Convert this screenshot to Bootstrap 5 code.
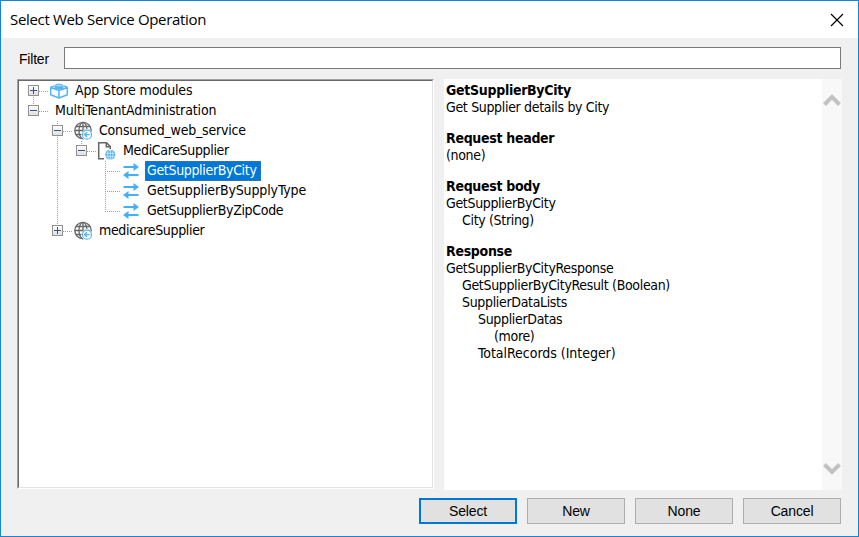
<!DOCTYPE html>
<html lang="en">
<head>
<meta charset="utf-8">
<title>Select Web Service Operation</title>
<link href="https://cdn.jsdelivr.net/npm/bootstrap@5.3.0/dist/css/bootstrap.min.css" rel="stylesheet">
<style>
body{margin:0;background:#f0f0f0;color:#000;font-family:"DejaVu Sans Condensed","DejaVu Sans",sans-serif;font-size:14px;overflow:hidden}
.dialog{width:859px;height:537px;border:1px solid #1883d7;background:#f0f0f0}
.titlebar{height:37px;padding:0 14px 0 9px;font-family:"Open Sans","Noto Sans",sans-serif;font-size:15px;letter-spacing:-.33px}
.filter-row{height:22px;margin:9px 17px 0 18px}
.filter-row label{width:45px;font:14px/22px "Liberation Sans",Arial,sans-serif;letter-spacing:-.2px;padding-top:1px}
.filter-row input{height:22px;min-width:0;border:1px solid #7a7a7a;background:#fff;outline:0}
.panes{margin:10px 16px 0 16px;height:411px;gap:10px}
.tree{width:417px;height:410px;border:1px solid;border-color:#a0a0a0 #fff #fff #a0a0a0;background:#fff}
.tree-in{height:408px;border:1px solid;border-color:#696969 #e3e3e3 #e3e3e3 #696969;padding-left:2px}
.node{height:20px;white-space:nowrap}
.cell{width:24px;height:20px;flex:none;display:flex;align-items:center;justify-content:center;position:relative}
.cell::before{content:"";position:absolute;left:12px;width:1px;top:0;bottom:0;background:none}
.g-full::before,.g-up::before,.g-down::before{background:repeating-linear-gradient(180deg,#a0a0a0 0 1px,transparent 1px 2px)}
.g-up::before{bottom:10px}
.g-down::before{top:10px}
.dots{height:1px;width:9px;flex:none;margin-left:-6px;background:repeating-linear-gradient(90deg,#a0a0a0 0 1px,transparent 1px 2px)}
.dots-leaf{width:15px;margin-left:-12px}
.toggle{position:relative;left:.5px;top:-.5px;width:11px;height:11px;display:block}
.icon{width:20px;height:20px;flex:none;margin-left:1px;margin-right:4px}
.text{height:20px;line-height:18px;padding:0 4px 0 2px}
.noicon{margin-left:5px}
.picked{background:#0078d7;color:#fff;outline:1px dotted #3f7ba8;outline-offset:-1px}
.k1{letter-spacing:-.13px}.k2{letter-spacing:-.2px}.k3{letter-spacing:-.33px}
.details{width:378px;padding:3px 0 0 2px;background:#fff;line-height:17px;letter-spacing:-.33px}
.details p{margin:0 0 14px}
.details b{display:block;letter-spacing:-.3px}
.details span{display:block}
.details .wide{letter-spacing:-.03px}
.in1{padding-left:16px}.in2{padding-left:32px}.in3{padding-left:48px}
.scroll{width:20px;background:#f8f8f8;padding:14px 0 14px 1px}
.actions{margin:8px 17px 0 0;gap:10px}
.actions .btn{width:98px;height:26px;padding:0;border:1px solid #adadad;border-radius:0;background:#e1e1e1;color:#000;font:14px/22px "Liberation Sans",Arial,sans-serif;letter-spacing:-.15px}
.actions .main{border:2px solid #0078d7;line-height:20px}
</style>
<script src="https://cdn.jsdelivr.net/npm/bootstrap@5.3.0/dist/js/bootstrap.bundle.min.js"></script>
</head>
<body>
<svg width="0" height="0" class="position-absolute">
  <defs>
    <linearGradient id="boxfill" x1="0" y1="0" x2="0" y2="1"><stop offset="0" stop-color="#fff"/><stop offset="1" stop-color="#dedede"/></linearGradient>
    <symbol id="minus" viewBox="0 0 11 11"><rect x=".5" y=".5" width="10" height="10" fill="url(#boxfill)" stroke="#919191"/><path d="M2 5.5h7" stroke="#3b4f9f"/></symbol>
    <symbol id="plus" viewBox="0 0 11 11"><use href="#minus"/><path d="M5.500 2v7" stroke="#3b4f9f"/></symbol>
    <symbol id="module" viewBox="0 0 20 20"><g fill="none" stroke="#55b5f5" stroke-width="1.500" stroke-linejoin="round"><path d="M1.700 6.500 10 9.500 18.300 6.500V13.800L10 17 1.700 13.800zM10 9.500V17M1.700 6.500 5 4.800M18.300 6.500 15 4.800"/></g><path d="M5.500 4.600v2.300c0 2 9 2 9 0V4.600z" fill="#55b5f5"/><ellipse cx="10" cy="4.600" rx="4.200" ry="1.400" fill="#a5d9fc" stroke="#55b5f5"/></symbol>
    <symbol id="globe" viewBox="0 0 20 20"><g fill="none" stroke="#666" stroke-width="1.300"><circle cx="10" cy="9.500" r="8.200"/><ellipse cx="10" cy="9.500" rx="4" ry="8.200"/><path d="M10 1.500v16M2.800 5.500h14.400M1.800 9.500h16.400M2.800 13.500h14.400"/></g><circle cx="14" cy="13.700" r="5.600" fill="#fff"/><circle cx="14" cy="13.700" r="4.500" fill="#fff" stroke="#55b5f5" stroke-width="1.200"/><path d="M16.800 13.600h-5M13.900 11.200l-2.400 2.400 2.400 2.400" fill="none" stroke="#55b5f5" stroke-width="1.400"/></symbol>
    <symbol id="doc" viewBox="0 0 20 20"><path d="M7 17.800H1.700V1.700H9.500L13.300 5.500V8M9.300 2V5.800H13" fill="none" stroke="#666" stroke-width="1.500"/><circle cx="13.300" cy="13.800" r="5" fill="#45b0fa"/><path d="M13.300 9.300v9M8.800 12.300h9M8.800 15.300h9" stroke="#fff" stroke-width=".6"/><ellipse cx="13.300" cy="13.800" rx="2.600" ry="4.500" fill="none" stroke="#fff" stroke-width=".6"/></symbol>
    <symbol id="swap" viewBox="0 0 20 20"><path d="M2.500 6H14M6 14H17.500" stroke="#45b0fa" stroke-width="2"/><path d="M12.500 2 18 6l-5.500 4zM7.500 10 2 14l5.500 4z" fill="#45b0fa"/></symbol>
  </defs>
</svg>
<main class="dialog">
  <header class="titlebar bg-white d-flex align-items-center justify-content-between">
    <span>Select Web Service Operation</span>
    <svg width="14" height="14" viewBox="0 0 14 14"><path d="M1 1 13 13M13 1 1 13" stroke="#000" stroke-width="1.200"/></svg>
  </header>
  <div class="filter-row d-flex">
    <label for="filter">Filter</label>
    <input id="filter" class="flex-grow-1" type="text">
  </div>
  <div class="panes d-flex">
    <section class="tree"><div class="tree-in">
      <div class="node d-flex align-items-center"><span class="cell g-down"><svg class="toggle"><use href="#plus"/></svg></span><i class="dots"></i><svg class="icon"><use href="#module"/></svg><span class="text k1">App Store modules</span></div>
      <div class="node d-flex align-items-center"><span class="cell g-up"><svg class="toggle"><use href="#minus"/></svg></span><i class="dots"></i><span class="text noicon k1">MultiTenantAdministration</span></div>
      <div class="node d-flex align-items-center"><span class="cell"></span><span class="cell g-full"><svg class="toggle"><use href="#minus"/></svg></span><i class="dots"></i><svg class="icon"><use href="#globe"/></svg><span class="text k2">Consumed_web_service</span></div>
      <div class="node d-flex align-items-center"><span class="cell"></span><span class="cell g-full"></span><span class="cell g-up"><svg class="toggle"><use href="#minus"/></svg></span><i class="dots"></i><svg class="icon"><use href="#doc"/></svg><span class="text k3">MediCareSupplier</span></div>
      <div class="node d-flex align-items-center"><span class="cell"></span><span class="cell g-full"></span><span class="cell"></span><span class="cell g-full"></span><i class="dots dots-leaf"></i><svg class="icon"><use href="#swap"/></svg><span class="text picked k3">GetSupplierByCity</span></div>
      <div class="node d-flex align-items-center"><span class="cell"></span><span class="cell g-full"></span><span class="cell"></span><span class="cell g-full"></span><i class="dots dots-leaf"></i><svg class="icon"><use href="#swap"/></svg><span class="text k1">GetSupplierBySupplyType</span></div>
      <div class="node d-flex align-items-center"><span class="cell"></span><span class="cell g-full"></span><span class="cell"></span><span class="cell g-up"></span><i class="dots dots-leaf"></i><svg class="icon"><use href="#swap"/></svg><span class="text k3">GetSupplierByZipCode</span></div>
      <div class="node d-flex align-items-center"><span class="cell"></span><span class="cell g-up"><svg class="toggle"><use href="#plus"/></svg></span><i class="dots"></i><svg class="icon"><use href="#globe"/></svg><span class="text k3">medicareSupplier</span></div>
    </div></section>
    <section class="d-flex">
      <div class="details">
        <p><b>GetSupplierByCity</b><span>Get Supplier details by City</span></p>
        <p><b>Request header</b><span>(none)</span></p>
        <p><b>Request body</b><span>GetSupplierByCity</span><span class="in1">City (String)</span></p>
        <p><b>Response</b><span>GetSupplierByCityResponse</span><span class="in1">GetSupplierByCityResult (Boolean)</span><span class="in1">SupplierDataLists</span><span class="in2">SupplierDatas</span><span class="in3">(more)</span><span class="in2 wide">TotalRecords (Integer)</span></p>
      </div>
      <div class="scroll d-flex flex-column justify-content-between">
        <svg width="18" height="14" viewBox="0 0 18 14"><path d="M1.500 11.500 9 4l7.500 7.500" fill="none" stroke="#c2c2c2" stroke-width="4"/></svg>
        <svg width="18" height="14" viewBox="0 0 18 14"><path d="M1.500 2.500 9 10l7.500-7.500" fill="none" stroke="#c2c2c2" stroke-width="4"/></svg>
      </div>
    </section>
  </div>
  <footer class="actions d-flex justify-content-end">
    <button class="btn main" type="button">Select</button>
    <button class="btn" type="button">New</button>
    <button class="btn" type="button">None</button>
    <button class="btn" type="button">Cancel</button>
  </footer>
</main>
</body>
</html>
